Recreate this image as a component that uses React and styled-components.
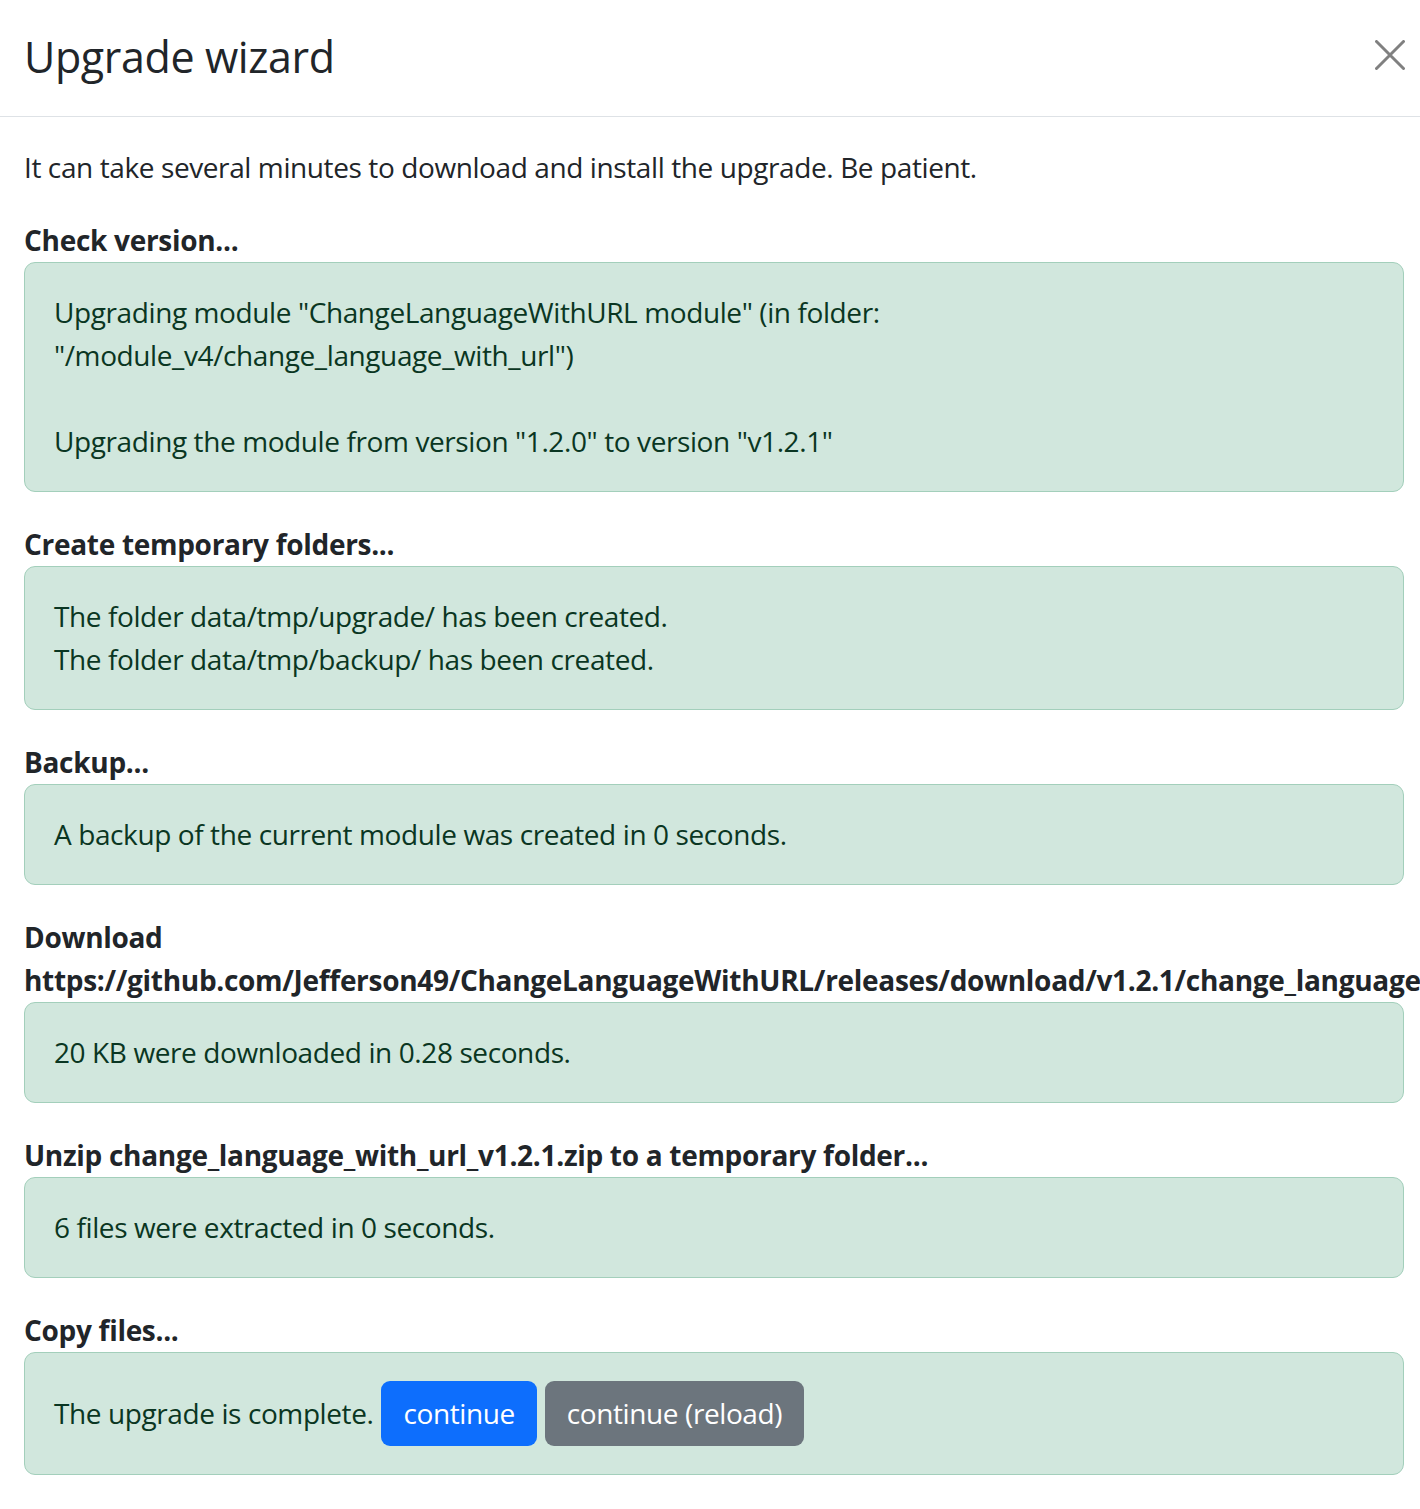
import React from 'react';
import styled, { createGlobalStyle } from 'styled-components';

const GlobalStyle = createGlobalStyle`
  html, body {
    margin: 0;
    padding: 0;
    background: #fff;
    overflow-x: hidden;
  }
  body {
    font-family: "Open Sans", "Noto Sans", sans-serif;
    color: #212529;
  }
`;

const Modal = styled.div`
  width: 1420px;
  display: flex;
  flex-direction: column;
`;

const Header = styled.div`
  height: 117px;
  box-sizing: border-box;
  border-bottom: 1px solid #dee2e6;
  padding: 0 14px 0 24px;
  display: flex;
  align-items: center;
  justify-content: space-between;
`;

const Title = styled.h1`
  margin: 0 0 2px;
  font-size: 43px;
  font-weight: 500;
  letter-spacing: -0.4px;
  line-height: 1.2;
  color: #212529;
`;

const CloseButton = styled.button`
  width: 32px;
  height: 32px;
  padding: 0;
  border: none;
  background: transparent;
  display: flex;
  align-items: center;
  justify-content: center;
  margin-bottom: 6px;
  cursor: pointer;
`;

const Body = styled.div`
  padding: 29px 16px 0 24px;
  font-size: 28px;
  letter-spacing: -0.4px;
  line-height: 43px;
`;

const Intro = styled.p`
  margin: 0 0 30px;
`;

const StepTitle = styled.div`
  font-weight: 700;
  letter-spacing: -0.3px;
  white-space: ${p => (p.$nowrap ? 'nowrap' : 'normal')};
`;

const Alert = styled.div`
  background: #d1e7dd;
  border: 1px solid #a3cfbb;
  border-radius: 11px;
  color: #0a3622;
  padding: 28px 29px;
  margin-bottom: 31px;
  display: ${p => (p.$inline ? 'flex' : 'block')};
  align-items: center;
  gap: 8px;
`;

const Button = styled.button`
  font-family: inherit;
  font-size: 28px;
  letter-spacing: -0.4px;
  line-height: 43px;
  padding: 11px 22px;
  border: none;
  border-radius: 9px;
  color: #fff;
  background: ${p => (p.$variant === 'secondary' ? '#6c757d' : '#0d6efd')};
  cursor: pointer;
`;

const steps = [
  {
    title: 'Check version...',
    lines: [
      'Upgrading module "ChangeLanguageWithURL module" (in folder: "/module_v4/change_language_with_url")',
      '',
      'Upgrading the module from version "1.2.0" to version "v1.2.1"',
    ],
  },
  {
    title: 'Create temporary folders...',
    lines: [
      'The folder data/tmp/upgrade/ has been created.',
      'The folder data/tmp/backup/ has been created.',
    ],
  },
  {
    title: 'Backup...',
    lines: ['A backup of the current module was created in 0 seconds.'],
  },
  {
    title: 'Download',
    url: 'https://github.com/Jefferson49/ChangeLanguageWithURL/releases/download/v1.2.1/change_language_with_url_v1.2.1.zip...',
    lines: ['20 KB were downloaded in 0.28 seconds.'],
  },
  {
    title: 'Unzip change_language_with_url_v1.2.1.zip to a temporary folder...',
    lines: ['6 files were extracted in 0 seconds.'],
  },
];

export default function App() {
  return (
    <Modal>
      <GlobalStyle />
      <Header>
        <Title>Upgrade wizard</Title>
        <CloseButton aria-label="Close">
          <svg width="30" height="30" viewBox="0 0 30 30">
            <path d="M1.5 1.5 L28.5 28.5 M28.5 1.5 L1.5 28.5" stroke="#808080" strokeWidth="3" strokeLinecap="round" />
          </svg>
        </CloseButton>
      </Header>
      <Body>
        <Intro>It can take several minutes to download and install the upgrade. Be patient.</Intro>
        {steps.map(step => (
          <React.Fragment key={step.title}>
            <StepTitle>{step.title}</StepTitle>
            {step.url && <StepTitle $nowrap>{step.url}</StepTitle>}
            <Alert>
              {step.lines.map((line, i) => (
                <div key={i}>{line || '\u00a0'}</div>
              ))}
            </Alert>
          </React.Fragment>
        ))}
        <StepTitle>Copy files...</StepTitle>
        <Alert $inline>
          <span>The upgrade is complete.</span>
          <Button>continue</Button>
          <Button $variant="secondary">continue (reload)</Button>
        </Alert>
      </Body>
    </Modal>
  );
}
